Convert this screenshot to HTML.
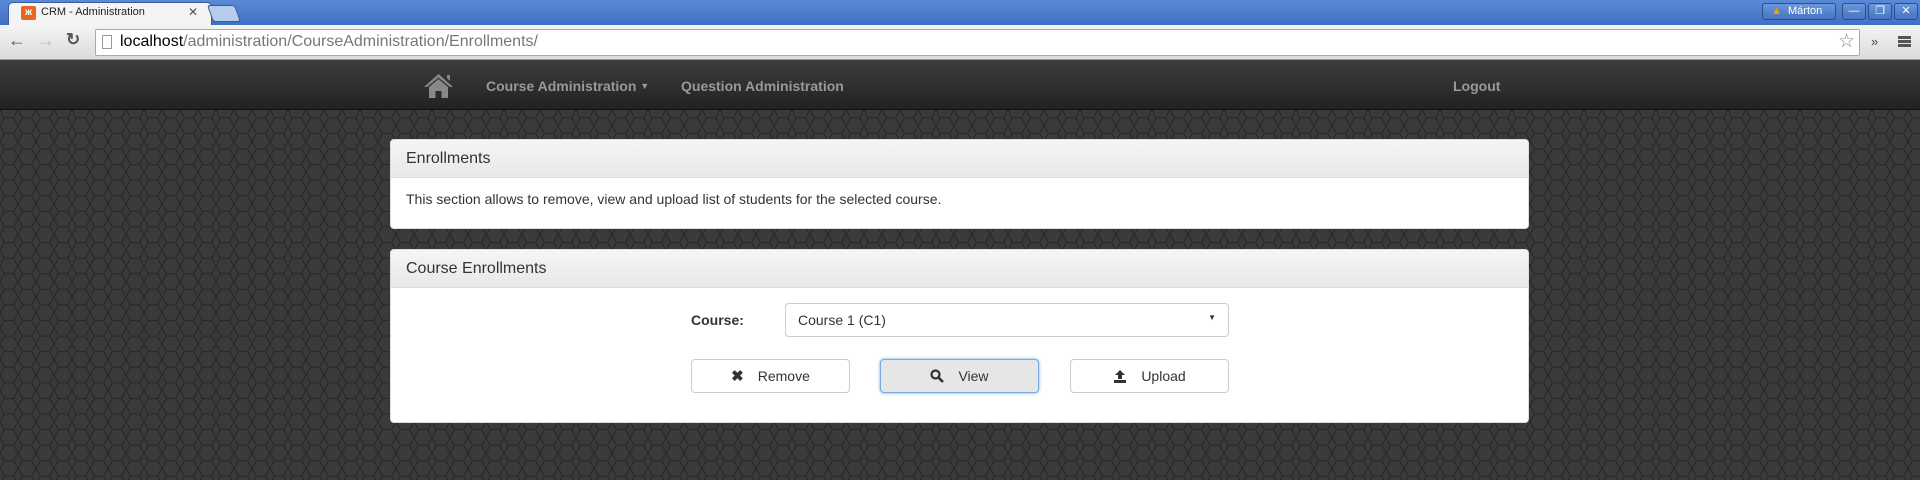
<!DOCTYPE html>
<html><head><meta charset="utf-8"><style>
*{box-sizing:border-box;margin:0;padding:0}
body{width:1920px;height:480px;overflow:hidden;font-family:"Liberation Sans",Arial,sans-serif;position:relative;background:#333}
.abs{position:absolute}
#top{left:0;top:0;width:1920px;height:26px;background:linear-gradient(#5a8ad6,#3f6fc4)}
#tab{left:8px;top:2px;width:204px;height:25px;background:#f4f4f4;border-radius:5px 5px 0 0;border:1px solid #3a5c9c;border-bottom:none}
#tab2{left:210px;top:5px;width:28px;height:17px;background:#b7cbeb;border-radius:3px;transform:skewX(20deg);border:1px solid #355a9a}
#tool{left:0;top:25px;width:1920px;height:35px;background:linear-gradient(#f4f4f4,#dcdcdc);border-bottom:1px solid #999}
#addr{left:95px;top:29px;width:1765px;height:27px;background:#fff;border:1px solid #aaa;border-radius:2px}
#nav{left:0;top:60px;width:1920px;height:50px;background:linear-gradient(#3d3d3d,#222);border-bottom:1px solid #111}
.nv{color:#999;font-weight:bold;font-size:14px;top:78px}
#bg{left:0;top:110px;width:1920px;height:370px}
.panel{left:390px;width:1139px;background:#fff;border-radius:4px;border:1px solid #ddd;overflow:hidden}
.ph{height:38px;background:linear-gradient(#f5f5f5,#e8e8e8);border-bottom:1px solid #ddd;font-size:16px;color:#333;padding:10px 15px}
.btn{height:34px;width:159px;border:1px solid #ccc;border-radius:4px;background:#fff;font-size:14px;color:#333;display:flex;align-items:center;justify-content:center;gap:14px}
.wb{top:3px;height:17px;width:24px;border:1px solid #2c4e8e;border-radius:3px;background:linear-gradient(#6b97dc,#4773c0);color:#fff;font-size:11px;text-align:center;line-height:15px}
</style></head><body>
<div id="top" class="abs"></div>
<div id="tab" class="abs"></div>
<div class="abs" style="left:21px;top:6px;width:15px;height:14px;background:#e8661f;border-radius:2px;color:#fff;font-size:10px;text-align:center;line-height:14px;font-weight:bold">ж</div>
<div class="abs" style="left:41px;top:6px;font-size:11px;color:#222">CRM - Administration</div>
<div class="abs" style="left:188px;top:5px;font-size:12px;color:#555">✕</div>
<div id="tab2" class="abs"></div>
<div class="abs wb" style="left:1762px;width:74px;color:#fff;text-align:left;padding-left:8px"><span style="color:#f0a000">▲</span>&nbsp;&nbsp;Márton</div>
<div class="abs wb" style="left:1842px">—</div>
<div class="abs wb" style="left:1868px">❐</div>
<div class="abs wb" style="left:1894px">✕</div>
<div id="tool" class="abs"></div>
<div class="abs" style="left:8px;top:30px;font-size:18px;color:#555">←</div>
<div class="abs" style="left:37px;top:30px;font-size:18px;color:#bbb">→</div>
<div class="abs" style="left:66px;top:30px;font-size:17px;color:#555;font-weight:bold">↻</div>
<div id="addr" class="abs"></div>
<div class="abs" style="left:102px;top:35px;width:10px;height:14px;border:1px solid #999;background:#fff"></div>
<div class="abs" style="left:120px;top:33px;font-size:16px;color:#777"><span style="color:#000">localhost</span>/administration/CourseAdministration/Enrollments/</div>
<div class="abs" style="left:1838px;top:30px;font-size:19px;color:#888">☆</div>
<div class="abs" style="left:1871px;top:34px;font-size:13px;color:#444">»</div>
<div class="abs" style="left:1898px;top:36px;width:13px;height:11px;border-top:3px solid #555;border-bottom:3px solid #555"></div>
<div class="abs" style="left:1898px;top:40px;width:13px;height:3px;background:#555"></div>
<div id="nav" class="abs"></div>
<svg class="abs" style="left:423px;top:73px" width="31" height="26" viewBox="0 0 31 26"><path d="M15.5 1 L1 14 L4 14 L15.5 4.5 L27 14 L30 14 Z M24 2 h3 v6 l-3 -3Z" fill="#888"/><path d="M6 14 L15.5 6 L25 14 V25 H18.5 V18 H12.5 V25 H6 Z" fill="#888"/></svg>
<div class="abs nv" style="left:486px">Course Administration <span style="font-size:9px;position:relative;top:-2px">▼</span></div>
<div class="abs nv" style="left:681px">Question Administration</div>
<div class="abs nv" style="left:1453px">Logout</div>
<svg id="bg" class="abs" width="1920" height="370"><defs><pattern id="h" width="18" height="31.18" patternUnits="userSpaceOnUse"><rect width="18" height="31.18" fill="#3a3a3a"/><path d="M0 0 L4.5 7.8 L13.5 7.8 L18 0 M4.5 7.8 L0 15.59 M13.5 7.8 L18 15.59 M0 15.59 L4.5 23.38 L13.5 23.38 L18 15.59 M4.5 23.38 L0 31.18 M13.5 23.38 L18 31.18" stroke="#272727" stroke-width="1.1" fill="none"/></pattern></defs><rect width="1920" height="370" fill="url(#h)"/></svg>
<div class="abs panel" style="top:139px;height:90px"><div class="ph">Enrollments</div><div style="font-size:14px;color:#333;padding:13px 15px">This section allows to remove, view and upload list of students for the selected course.</div></div>
<div class="abs panel" style="top:249px;height:174px"><div class="ph">Course Enrollments</div></div>
<div class="abs" style="left:691px;top:312px;font-size:14px;font-weight:bold;color:#333">Course:</div>
<div class="abs" style="left:785px;top:303px;width:444px;height:34px;border:1px solid #ccc;border-radius:4px;background:#fff;font-size:14px;color:#333;padding:8px 12px">Course 1 (C1)<span style="position:absolute;right:12px;top:9px;font-size:8px">▼</span></div>
<div class="abs btn" style="left:691px;top:359px"><b style="font-size:15px">✖</b><span>Remove</span></div>
<div class="abs btn" style="left:880px;top:359px;background:#e6e6e6;border-color:#7aa7e0;box-shadow:0 0 3px #66afe9"><svg width="14" height="14" viewBox="0 0 14 14"><circle cx="5.5" cy="5.5" r="4" stroke="#333" stroke-width="2.2" fill="none"/><path d="M8.5 8.5 L13 13" stroke="#333" stroke-width="2.6"/></svg><span>View</span></div>
<div class="abs btn" style="left:1070px;top:359px"><svg width="14" height="14" viewBox="0 0 14 14"><path d="M7 1 L12 6 H9 V10 H5 V6 H2 Z" fill="#333"/><rect x="1" y="11" width="12" height="3" fill="#333"/></svg><span>Upload</span></div>
</body></html>
